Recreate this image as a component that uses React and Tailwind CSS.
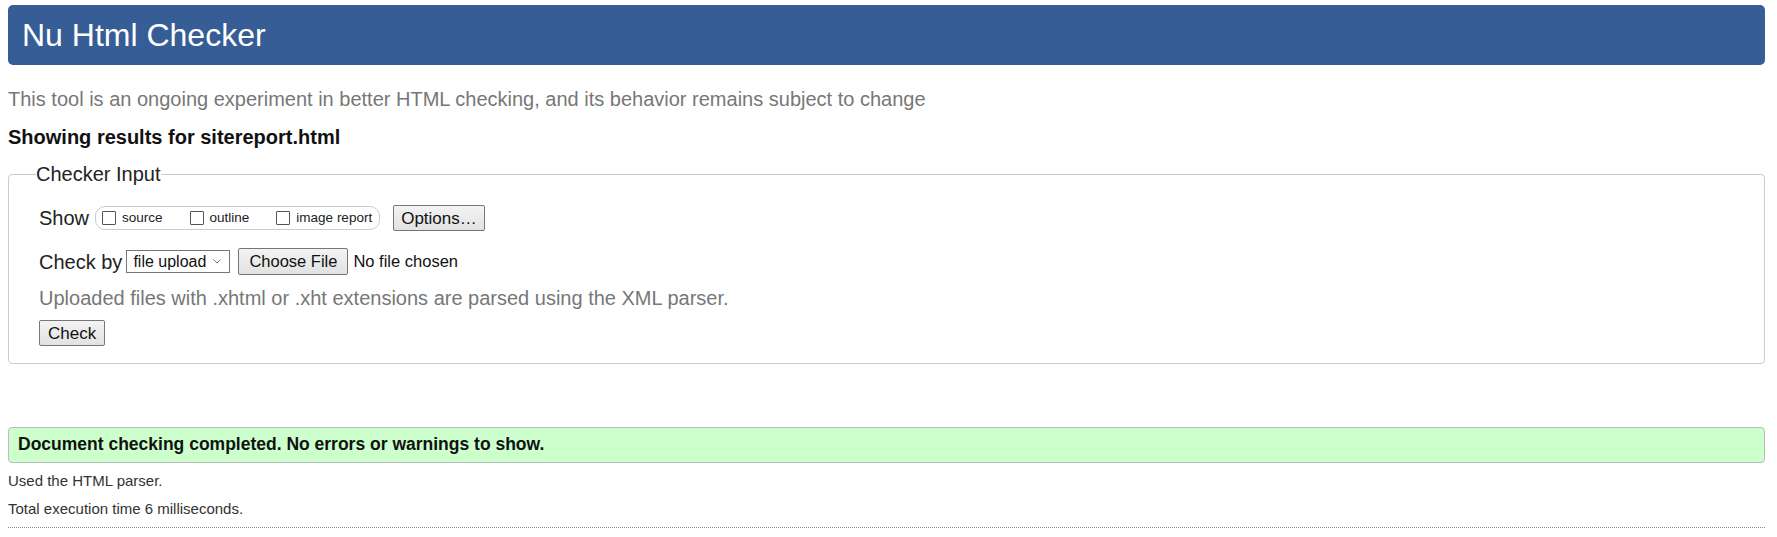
import React from "react";

function Box({ label, className = "" }) {
    return (
        <span className={"flex items-center " + className}>
            <span className="block w-[14px] h-[14px] border border-[#555] bg-white rounded-[1px]" />
            <span className="ml-[6px] text-[13.5px] leading-none text-[#222]">{label}</span>
        </span>
    );
}

function Btn({ children, className = "" }) {
    return (
        <button
            type="button"
            className={
                "flex items-center border border-[#767676] rounded-[2px] bg-gradient-to-b from-[#f3f3f3] to-[#e2e2e2] text-[#111] leading-none " +
                className
            }
        >
            {children}
        </button>
    );
}

export default function App() {
    return (
        <div className="min-h-screen bg-white font-['Liberation_Sans',Arial,sans-serif] text-[#222] pb-[10px]">
            <header className="mt-[5px] ml-[8px] mr-[12px] h-[60px] rounded-[5px] bg-[#365d95] flex items-center pl-[14px]">
                <h1 className="text-[32px] leading-none text-white">Nu Html Checker</h1>
            </header>

            <div className="ml-[8px] mr-[12px]">
                <p className="mt-[22px] text-[20px] leading-[24px] text-[#777]">
                    This tool is an ongoing experiment in better HTML checking, and its behavior remains subject to change
                </p>
                <p className="mt-[14px] text-[20px] leading-[24px] font-bold text-[#111]">
                    Showing results for sitereport.html
                </p>

                <fieldset className="mt-[13px] border border-[#ccc] rounded-[4px] pl-[30px] pr-4 pb-[17px]">
                    <legend className="-ml-[3px] text-[20px] leading-[24px] text-[#222]">Checker Input</legend>

                    <div className="mt-[19px] h-[26px] flex items-center">
                        <span className="text-[20px] leading-none">Show</span>
                        <div className="ml-[6px] h-[24px] border border-[#ccc] rounded-[10px] pl-[6px] pr-[7px] flex items-center">
                            <Box label="source" />
                            <Box label="outline" className="ml-[27px]" />
                            <Box label="image report" className="ml-[27px]" />
                        </div>
                        <Btn className="ml-[13px] h-[26px] px-[7px] text-[17px]">Options…</Btn>
                    </div>

                    <div className="mt-[17px] h-[27px] flex items-center">
                        <span className="text-[20px] leading-none">Check by</span>
                        <div className="ml-[4px] w-[104px] h-[23px] border border-[#767676] bg-white flex items-center justify-between pl-[6px] pr-[8px]">
                            <span className="text-[16px] leading-none text-[#111]">file upload</span>
                            <svg width="8" height="5" viewBox="0 0 8 5" fill="none">
                                <path d="M0.5 0.5L4 4L7.5 0.5" stroke="#777" strokeWidth="1" />
                            </svg>
                        </div>
                        <Btn className="ml-[8px] h-[27px] px-[10px] text-[16.5px]">Choose File</Btn>
                        <span className="ml-[5px] text-[16.5px] leading-none text-[#111]">No file chosen</span>
                    </div>

                    <p className="mt-[11px] text-[20px] leading-[24px] text-[#777]">
                        Uploaded files with .xhtml or .xht extensions are parsed using the XML parser.
                    </p>

                    <Btn className="mt-[10px] h-[26px] px-[8px] text-[17px]">Check</Btn>
                </fieldset>

                <div className="mt-[63px] h-[36px] bg-[#ccffcc] border border-[#bbb] rounded-[4px] flex items-center pl-[9px]">
                    <span className="text-[17.5px] leading-none font-bold text-[#111]">
                        Document checking completed. No errors or warnings to show.
                    </span>
                </div>

                <p className="mt-[8px] text-[15px] leading-[20px] text-[#333]">Used the HTML parser.</p>
                <p className="mt-[8px] text-[15px] leading-[20px] text-[#333]">Total execution time 6 milliseconds.</p>
                <div className="mt-[8px] border-t border-dotted border-[#888]" />
            </div>
        </div>
    );
}
